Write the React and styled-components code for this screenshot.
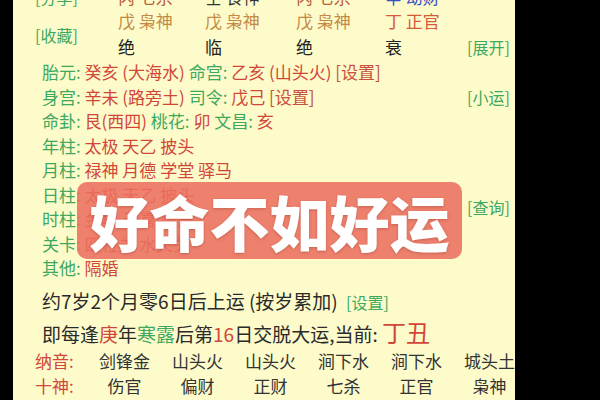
import styled, { createGlobalStyle } from "styled-components";

const GlobalStyle = createGlobalStyle`
  html, body {
    margin: 0;
    padding: 0;
    background: #000;
  }
  body {
    font-family: "Noto Sans CJK SC", "Noto Sans", sans-serif;
  }
`;

const green = "#3ea85e";
const red = "#d2463a";
const brown = "#c48a45";

const pillars = [
  [
    { text: "丙 七杀", color: "#b95c3e" },
    { text: "壬 食神", color: "#333" },
    { text: "丙 七杀", color: "#b95c3e" },
    { text: "辛 劫财", color: "#3a4fc2" },
  ],
  [
    { text: "戊 枭神", color: brown },
    { text: "戊 枭神", color: brown },
    { text: "戊 枭神", color: brown },
    { text: "丁 正官", color: "#d65a3c" },
  ],
  [
    { text: "绝", color: "#222" },
    { text: "临", color: "#222" },
    { text: "绝", color: "#222" },
    { text: "衰", color: "#222" },
  ],
];

const info = [
  [["胎元", "癸亥 (大海水)"], ["命宫", "乙亥 (山头火)"], ["set"]],
  [["身宫", "辛未 (路旁土)"], ["司令", "戊己"], ["set"]],
  [["命卦", "艮(西四)"], ["桃花", "卯"], ["文昌", "亥"]],
  [["年柱", "太极 天乙 披头"]],
  [["月柱", "禄神 月德 学堂 驿马"]],
  [["日柱", "太极 天乙 披头"]],
  [["时柱", "金舆 天喜 华盖"]],
  [["关卡", "四柱关 水火关"]],
  [["其他", "隔婚"]],
];

const nayin = ["剑锋金", "山头火", "山头火", "涧下水", "涧下水", "城头土"];
const shishen = ["伤官", "偏财", "正财", "七杀", "正官", "枭神"];
const lastRow = [
  { text: "长生", color: "#333" },
  { text: "墓库", color: "#333" },
  { text: "沐浴", color: "#333" },
  { text: "冠带", color: "#6a7a6a" },
  { text: "帝旺", color: "#e07a3a" },
  { text: "胎养", color: "#333" },
];

function App() {
  return (
    <>
      <GlobalStyle />
      <Screen>
        <SideBar />
        <Panel>
          <PillarGrid>
            <SideLink $row="1">[分享]</SideLink>
            <SideLink $row="2 / span 2">[收藏]</SideLink>
            {pillars.map((row, r) =>
              row.map((cell, c) => (
                <PillarCell key={`${r}-${c}`} $color={cell.color} $row={r + 1} $col={c + 2}>
                  {cell.text}
                </PillarCell>
              ))
            )}
            <SideLink $row="3" $col="6">[展开]</SideLink>
          </PillarGrid>

          <InfoArea>
            {info.map((line, i) => (
              <InfoLine key={i} $row={i + 1}>
                {line.map((part, j) =>
                  part[0] === "set" ? (
                    <Setting key={j}>[设置]</Setting>
                  ) : (
                    <span key={j}>
                      <Label>{part[0]}: </Label>
                      <Value>{part[1]}</Value>{" "}
                    </span>
                  )
                )}
              </InfoLine>
            ))}
            <SideLink $row="2" $col="2">[小运]</SideLink>
            <SideLink $row="6 / span 2" $col="2">[查询]</SideLink>
          </InfoArea>

          <LuckBlock>
            <LuckLine>
              约7岁2个月零6日后上运 (按岁累加) <GreenSmall>[设置]</GreenSmall>
            </LuckLine>
            <LuckLine>
              即每逢<Mark $color={red}>庚</Mark>年<Mark $color={green}>寒露</Mark>后第
              <Mark $color={red}>16</Mark>日交脱大运,当前: <Current>丁丑</Current>
            </LuckLine>
          </LuckBlock>

          <TableRow>
            <RowLabel>纳音:</RowLabel>
            {nayin.map((t, i) => (
              <Cell key={i}>{t}</Cell>
            ))}
          </TableRow>
          <TableRow>
            <RowLabel>十神:</RowLabel>
            {shishen.map((t, i) => (
              <Cell key={i}>{t}</Cell>
            ))}
          </TableRow>
          <TableRow $tall>
            <RowLabel>地势:</RowLabel>
            {lastRow.map((t, i) => (
              <Cell key={i} $color={t.color}>
                {t.text}
              </Cell>
            ))}
          </TableRow>

          <Banner>
            <BannerText>好命不如好运</BannerText>
          </Banner>
        </Panel>
      </Screen>
    </>
  );
}

const Screen = styled.div`
  display: flex;
  width: 600px;
  height: 400px;
  overflow: hidden;
  background: #000;
`;

const SideBar = styled.div`
  width: 13px;
  flex-shrink: 0;
  background: #000;
`;

const Panel = styled.div`
  position: relative;
  width: 502px;
  height: 400px;
  flex-shrink: 0;
  background: #fdfbca;
  overflow: hidden;
`;

const PillarGrid = styled.div`
  display: grid;
  grid-template-columns: 83px 87px 91px 89px 82px 40px;
  grid-template-rows: 24px 24px 27px;
  padding-left: 22px;
  margin-top: -15px;
  font-size: 17px;
  align-items: center;
  white-space: nowrap;
`;

const PillarCell = styled.div`
  grid-row: ${(p) => p.$row};
  grid-column: ${(p) => p.$col};
  color: ${(p) => p.$color};
  line-height: 24px;
`;

const SideLink = styled.div`
  grid-row: ${(p) => p.$row};
  grid-column: ${(p) => p.$col || 1};
  align-self: center;
  color: ${green};
  font-size: 16px;
  white-space: nowrap;
`;

const InfoArea = styled.div`
  display: grid;
  grid-template-columns: 425px 48px;
  grid-template-rows: repeat(9, 24.5px);
  padding-left: 29px;
  align-items: center;
`;

const InfoLine = styled.div`
  grid-row: ${(p) => p.$row};
  grid-column: 1;
  font-size: 17px;
  line-height: 24.5px;
  white-space: nowrap;
`;

const Label = styled.span`
  color: ${green};
`;

const Value = styled.span`
  color: ${red};
`;

const Setting = styled.span`
  color: #c9503e;
`;

const LuckBlock = styled.div`
  margin-top: 5px;
  padding-left: 29px;
`;

const LuckLine = styled.div`
  font-size: 19px;
  line-height: 29px;
  color: #2a2a2a;
  white-space: nowrap;
`;

const GreenSmall = styled.span`
  color: ${green};
  font-size: 16px;
  margin-left: 4px;
`;

const Mark = styled.span`
  color: ${(p) => p.$color};
`;

const Current = styled.span`
  color: ${red};
  font-size: 24px;
`;

const TableRow = styled.div`
  display: grid;
  grid-template-columns: 53px repeat(6, 73px);
  padding-left: 22px;
  height: 25.5px;
  align-items: center;
  font-size: ${(p) => (p.$tall ? "20px" : "17px")};
  white-space: nowrap;
`;

const RowLabel = styled.div`
  color: ${red};
`;

const Cell = styled.div`
  text-align: center;
  color: ${(p) => p.$color || "#333"};
`;

const Banner = styled.div`
  position: absolute;
  left: 64px;
  top: 182px;
  width: 385px;
  height: 77px;
  border-radius: 10px;
  background: rgba(236, 112, 96, 0.88);
  display: flex;
  align-items: center;
  justify-content: center;
`;

const BannerText = styled.div`
  color: #fff;
  font-size: 60px;
  font-weight: 900;
  letter-spacing: 0;
  line-height: 1;
  text-shadow: 0 1px 3px rgba(120, 40, 30, 0.35);
  white-space: nowrap;
`;

export default App;
